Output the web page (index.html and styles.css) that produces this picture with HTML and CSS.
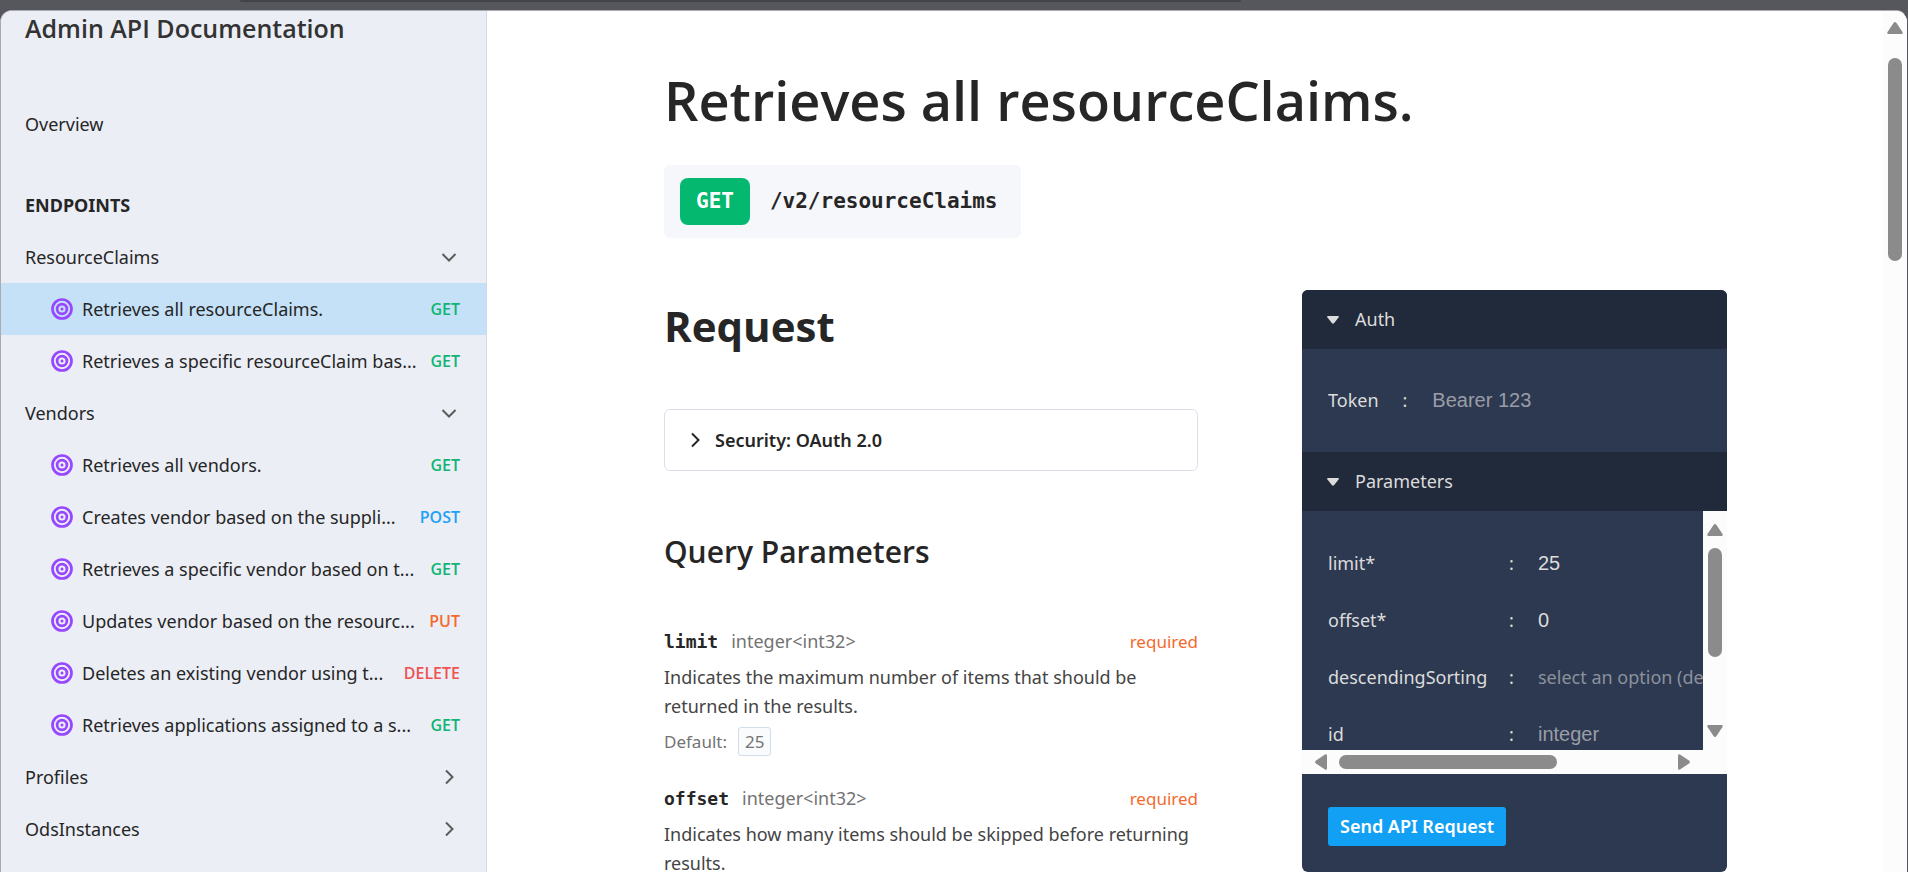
FILE: index.html
```html
<!DOCTYPE html>
<html lang="en">
<head>
<meta charset="utf-8">
<title>Admin API Documentation</title>
<link rel="stylesheet" href="styles.css">
</head>
<body>
<svg class="defs" aria-hidden="true">
  <symbol id="target" viewBox="0 0 22 22">
    <g fill="none" stroke="#9747ff" stroke-width="2.7"><circle cx="11" cy="11" r="9.500"/><circle cx="11" cy="11" r="4.900"/></g>
    <circle cx="11" cy="11" r="1.500" fill="#9747ff"/>
  </symbol>
  <symbol id="down" viewBox="0 0 16 16"><path d="M1.500 5 8 11.500l6.500-6.500" fill="none" stroke="currentColor" stroke-width="2"/></symbol>
  <symbol id="right" viewBox="0 0 16 16"><path d="M5 1.500 11.500 8l-6.500 6.500" fill="none" stroke="currentColor" stroke-width="2"/></symbol>
  <symbol id="caret" viewBox="0 0 12 8"><path d="M0.800 0h10.400q1 0.300 0.500 1.300L7 7.200q-1 0.900-2 0L0.300 1.300Q-0.200 0.300 0.800 0z" fill="currentColor"/></symbol>
  <symbol id="tri" viewBox="0 0 16 12"><path d="M6.500 1Q8-0.800 9.500 1l6 9q0.800 1.800-1 2h-13q-1.800-0.200-1-2z" fill="#8b8b8b"/></symbol>
</svg>
<div class="chrome"><div class="chrome-tab"></div></div>
<div class="window">
  <nav class="sidebar" aria-label="API">
    <h2 class="brand">Admin API Documentation</h2>
    <a class="overview" href="#">Overview</a>
    <h3 class="group-title">ENDPOINTS</h3>
    <button class="row group"><span>ResourceClaims</span><svg class="chev"><use href="#down"/></svg></button>
    <a class="row item active" href="#"><svg class="target"><use href="#target"/></svg><span class="label">Retrieves all resourceClaims.</span><span class="verb get">GET</span></a>
    <a class="row item" href="#"><svg class="target"><use href="#target"/></svg><span class="label">Retrieves a specific resourceClaim bas...</span><span class="verb get">GET</span></a>
    <button class="row group"><span>Vendors</span><svg class="chev"><use href="#down"/></svg></button>
    <a class="row item" href="#"><svg class="target"><use href="#target"/></svg><span class="label">Retrieves all vendors.</span><span class="verb get">GET</span></a>
    <a class="row item" href="#"><svg class="target"><use href="#target"/></svg><span class="label">Creates vendor based on the suppli...</span><span class="verb post">POST</span></a>
    <a class="row item" href="#"><svg class="target"><use href="#target"/></svg><span class="label">Retrieves a specific vendor based on t...</span><span class="verb get">GET</span></a>
    <a class="row item" href="#"><svg class="target"><use href="#target"/></svg><span class="label">Updates vendor based on the resourc...</span><span class="verb put">PUT</span></a>
    <a class="row item" href="#"><svg class="target"><use href="#target"/></svg><span class="label">Deletes an existing vendor using t...</span><span class="verb delete">DELETE</span></a>
    <a class="row item" href="#"><svg class="target"><use href="#target"/></svg><span class="label">Retrieves applications assigned to a s...</span><span class="verb get">GET</span></a>
    <button class="row group"><span>Profiles</span><svg class="chev"><use href="#right"/></svg></button>
    <button class="row group"><span>OdsInstances</span><svg class="chev"><use href="#right"/></svg></button>
  </nav>
  <main class="main">
    <h1 class="title">Retrieves all resourceClaims.</h1>
    <div class="endpoint"><span class="endpoint-verb">GET</span><span class="endpoint-path">/v2/resourceClaims</span></div>
    <div class="columns">
      <section class="docs">
        <h2 class="request">Request</h2>
        <button class="security"><svg class="chev"><use href="#right"/></svg><span>Security: OAuth 2.0</span></button>
        <h3 class="query">Query Parameters</h3>
        <article class="param">
          <div class="param-head"><code>limit</code><span class="type">integer&lt;int32&gt;</span><span class="required">required</span></div>
          <p>Indicates the maximum number of items that should be returned in the results.</p>
          <div class="default"><span>Default:</span><span class="value">25</span></div>
        </article>
        <article class="param">
          <div class="param-head"><code>offset</code><span class="type">integer&lt;int32&gt;</span><span class="required">required</span></div>
          <p>Indicates how many items should be skipped before returning results.</p>
        </article>
      </section>
      <form class="panel">
        <button type="button" class="panel-head"><svg class="caret"><use href="#caret"/></svg>Auth</button>
        <div class="auth"><label for="token">Token</label><span>:</span><input id="token" placeholder="Bearer 123"></div>
        <button type="button" class="panel-head"><svg class="caret"><use href="#caret"/></svg>Parameters</button>
        <div class="scroller">
          <div class="fields">
            <label for="limit">limit*</label><span>:</span><input id="limit" value="25">
            <label for="offset">offset*</label><span>:</span><input id="offset" value="0">
            <label for="sorting">descendingSorting</label><span>:</span><select id="sorting"><option>select an option (defaults to: false)</option></select>
            <label for="id">id</label><span>:</span><input id="id" placeholder="integer">
          </div>
          <div class="vbar"><svg class="tri"><use href="#tri"/></svg><div class="thumb"></div><svg class="tri flip"><use href="#tri"/></svg></div>
          <div class="hbar"><svg class="tri turn-left"><use href="#tri"/></svg><div class="thumb"></div><svg class="tri turn-right"><use href="#tri"/></svg></div>
        </div>
        <div class="panel-foot"><button type="button" class="send">Send API Request</button></div>
      </form>
    </div>
  </main>
  <div class="page-bar"><svg class="tri"><use href="#tri"/></svg><div class="thumb"></div></div>
</div>
</body>
</html>
```
FILE: styles.css
```css
* { box-sizing: border-box; }
body {
  margin: 0;
  height: 100vh;
  display: flex;
  flex-direction: column;
  overflow: hidden;
  background: #56575c;
  color: #262626;
  font: 18px/29px "Noto Sans", "Open Sans", sans-serif;
}
h1, h2, h3, p { margin: 0; }
button, input, select { font: inherit; color: inherit; border: 0; background: none; padding: 0; margin: 0; }
a { color: inherit; text-decoration: none; }
.defs { display: none; }

.chrome { flex: none; height: 10px; padding: 0 667px 0 240px; }
.chrome-tab { height: 2px; background: #434448; border-radius: 0 0 6px 6px; }
.window {
  flex: 1;
  min-height: 0;
  display: flex;
  overflow: hidden;
  background: #fff;
  border: solid #a9aab2;
  border-width: 1px 1px 0;
  border-right-color: #56575c;
  border-radius: 12px 12px 0 0;
}

.sidebar {
  flex: none;
  width: 486px;
  overflow: hidden;
  background: #ebeef5;
  border-right: 1px solid #cfd9e8;
}
.brand { padding: 0 24px; font: 600 25px/35px "Open Sans", sans-serif; color: #333; }
.overview { display: block; padding: 0 24px; margin-top: 52px; line-height: 52px; }
.group-title { padding: 0 24px; margin-top: 29px; font-size: 18px; line-height: 52px; font-weight: 700; }
.row { display: flex; align-items: center; width: 100%; height: 52px; text-align: left; }
.group { justify-content: space-between; padding: 0 29px 0 24px; }
.item { padding: 0 26px 0 50px; gap: 9px; }
.active { background: #c4e1f7; }
.label { flex: 1; white-space: nowrap; }
.target { flex: none; width: 22px; height: 22px; }
.chev { flex: none; width: 16px; height: 16px; color: #5c5c5c; }
.verb { font: 600 16px/29px "Open Sans", sans-serif; }
.get { color: #10b574; }
.post { color: #1fa0f5; }
.put { color: #f46a2c; }
.delete { color: #f05252; }

.main { flex: 1; min-width: 0; overflow: hidden; padding: 49px 156px 0 177px; }
.title { font: 600 54px/80px "Open Sans", sans-serif; }
.endpoint {
  display: inline-flex;
  align-items: center;
  gap: 20px;
  margin-top: 25px;
  padding: 13px 23px 13px 16px;
  border-radius: 6px;
  background: #f6f7fb;
  font: 700 21px/47px "DejaVu Sans Mono", monospace;
}
.endpoint-verb { padding: 0 16px; border-radius: 8px; background: #05b870; color: #fff; }
.columns { display: grid; grid-template-columns: minmax(0, 1fr) 425px; gap: 104px; align-items: start; margin-top: 52px; }
.request { font: 700 42px/72px "Open Sans", sans-serif; }
.security {
  display: flex;
  align-items: center;
  gap: 12px;
  width: 100%;
  height: 62px;
  margin-top: 47px;
  padding: 0 22px;
  border: 1px solid #dadfea;
  border-radius: 6px;
  font-weight: 600;
}
.security .chev { color: #262626; }
.query { margin-top: 56px; font: 600 30px/50px "Open Sans", sans-serif; }
.param { margin-bottom: 24px; color: #444; }
.query + .param { margin-top: 46px; }
.param-head { display: flex; align-items: center; gap: 13px; height: 36px; margin-bottom: 4px; }
.param code { font: 700 18px/29px "DejaVu Sans Mono", monospace; color: #262626; }
.type { color: #737373; }
.required { margin-left: auto; color: #f46a2c; font-size: 17px; }
.default { display: flex; gap: 11px; margin-top: 6px; color: #737373; font-size: 17px; }
.value { padding: 0 6px; line-height: 27px; border: 1px solid #d3dcea; border-radius: 3px; background: #fafbfd; }

.panel { border-radius: 6px; overflow: hidden; background: #2d3950; color: #dcdcdc; }
.panel-head { display: flex; align-items: center; gap: 16px; width: 100%; height: 59px; padding: 0 25px; background: #212a3a; }
.caret { width: 12px; height: 8px; }
.panel input { font: 20px "Liberation Sans", Arial, sans-serif; min-width: 0; }
.panel input::placeholder { color: #9a9da6; opacity: 1; }
.auth { display: flex; align-items: center; height: 103px; padding: 0 26px; }
.auth span { padding: 0 25px 0 24px; }
.scroller { display: grid; grid-template: 239px 24px / minmax(0, 1fr) 24px; background: #fcfcfc; }
.fields {
  display: grid;
  grid-template-columns: 181px 29px 300px;
  grid-auto-rows: 57px;
  align-items: center;
  padding: 24px 26px 0;
  overflow: hidden;
  background: #2d3950;
}
.fields select { appearance: none; color: #8b919d; }
.vbar, .hbar { display: flex; align-items: center; justify-content: space-between; }
.vbar { flex-direction: column; padding: 13px 0; }
.hbar { padding: 0 11px; }
.tri { flex: none; width: 16px; height: 12px; }
.flip { transform: rotate(180deg); }
.turn-left { transform: rotate(-90deg); }
.turn-right { transform: rotate(90deg); }
.thumb { background: #8b8b8b; border-radius: 7px; }
.vbar .thumb { width: 14px; height: 109px; margin-bottom: 56px; }
.hbar .thumb { width: 218px; height: 14px; margin-right: 110px; }
.panel-foot { padding: 33px 26px 26px; }
.send { height: 39px; padding: 0 12px; border-radius: 3px; background: #12a0f4; color: #fff; font-weight: 600; }
.page-bar { flex: none; width: 24px; display: flex; flex-direction: column; align-items: center; gap: 24px; padding-top: 11px; background: #fcfcfc; }
.page-bar .thumb { width: 14px; height: 203px; }
```
